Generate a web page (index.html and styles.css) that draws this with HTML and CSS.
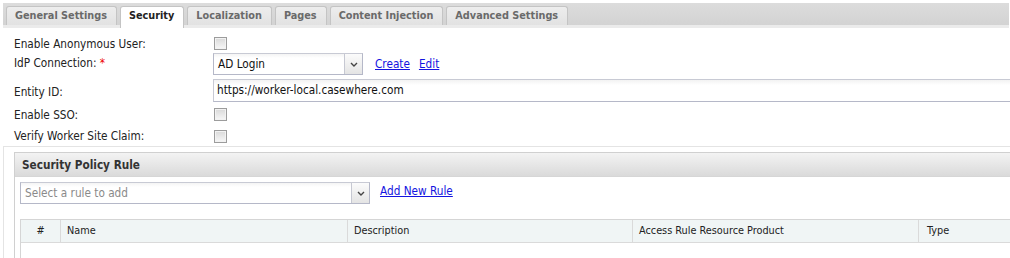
FILE: index.html
```html
<!DOCTYPE html>
<html>
<head>
<meta charset="utf-8">
<link rel="stylesheet" href="styles.css">
</head>
<body>
<div class="page">
  <div class="tabbar">
    <div class="tab">General Settings</div>
    <div class="tab active">Security</div>
    <div class="tab">Localization</div>
    <div class="tab">Pages</div>
    <div class="tab">Content Injection</div>
    <div class="tab">Advanced Settings</div>
  </div>
  <div class="tabstrip"></div>

  <div class="form">
    <div class="row r1">
      <div class="label">Enable Anonymous User:</div>
      <div class="field"><span class="checkbox"></span></div>
    </div>
    <div class="row r2">
      <div class="label lift">IdP Connection: <span class="req">*</span></div>
      <div class="field">
        <div class="combo w150">
          <span class="combo-text">AD Login</span>
          <span class="trigger"><svg width="8" height="5" viewBox="0 0 8 5"><path d="M1 1 L4 4 L7 1" fill="none" stroke="#444" stroke-width="1.4"/></svg></span>
        </div>
        <a class="link first" href="#">Create</a>
        <a class="link" href="#">Edit</a>
      </div>
    </div>
    <div class="row r3">
      <div class="label drop">Entity ID:</div>
      <div class="field"><div class="text-input">https://worker-local.casewhere.com</div></div>
    </div>
    <div class="row r4">
      <div class="label">Enable SSO:</div>
      <div class="field"><span class="checkbox"></span></div>
    </div>
    <div class="row r5">
      <div class="label">Verify Worker Site Claim:</div>
      <div class="field"><span class="checkbox"></span></div>
    </div>
  </div>

  <div class="outer">
    <div class="panel">
      <div class="panel-header">Security Policy Rule</div>
      <div class="panel-body">
        <div class="add-row">
          <div class="combo w350">
            <span class="combo-text placeholder">Select a rule to add</span>
            <span class="trigger"><svg width="8" height="5" viewBox="0 0 8 5"><path d="M1 1 L4 4 L7 1" fill="none" stroke="#444" stroke-width="1.4"/></svg></span>
          </div>
          <a class="link add" href="#">Add New Rule</a>
        </div>
        <div class="grid">
          <div class="grid-head">
            <div class="col c-num">#</div>
            <div class="col c-name">Name</div>
            <div class="col c-desc">Description</div>
            <div class="col c-prod">Access Rule Resource Product</div>
            <div class="col c-type">Type</div>
          </div>
          <div class="grid-body"></div>
        </div>
      </div>
    </div>
  </div>
</div>
</body>
</html>
```
FILE: styles.css
```css
html, body {
  margin: 0;
  padding: 0;
  background: #fff;
  overflow: hidden;
}
body {
  font-family: "DejaVu Sans Condensed", "DejaVu Sans", "Liberation Sans", sans-serif;
  font-stretch: condensed;
  font-size: 11.7px;
  color: #222;
  width: 1010px;
  height: 258px;
}
.page {
  width: 1010px;
  height: 258px;
  display: flex;
  flex-direction: column;
}

/* tabs */
.tabbar {
  margin: 3px 1px 0 3px;
  height: 22px;
  display: flex;
  align-items: flex-end;
  gap: 3px;
  padding-left: 3px;
  background: linear-gradient(#dcdcdc, #d3d3d3);
}
.tab {
  height: 18px;
  line-height: 18px;
  padding: 0 9px 0 8px;
  border: 1px solid #c4c4c4;
  border-bottom: none;
  border-radius: 3px 3px 0 0;
  background: linear-gradient(#ededed, #e2e2e2);
  color: #6a6a6a;
  font-weight: bold;
  font-size: 10.8px;
  white-space: nowrap;
}
.tab.active {
  background: #fff;
  color: #222;
  height: 19px;
  margin-bottom: -3px;
  padding-bottom: 2px;
  position: relative;
  z-index: 1;
}
.tabstrip {
  margin: 0 1px 0 3px;
  height: 3px;
  background: #ebebeb;
}

/* form */
.form {
  padding: 6px 0 0 14px;
}
.row {
  display: flex;
  align-items: center;
}
.label {
  width: 199px;
  flex: none;
  white-space: nowrap;
}
.label.lift { padding-bottom: 3px; }
.label.drop { padding-top: 2px; }
.req { color: #e00; }
.field {
  display: flex;
  align-items: center;
  flex: 1;
  min-width: 0;
}
.r1 { height: 19px; }
.r2 { height: 22px; }
.r3 { height: 25px; margin-top: 3px; }
.r4 { height: 23px; }
.r5 { height: 20px; }

.checkbox {
  display: inline-block;
  width: 11px;
  height: 11px;
  margin-left: 1px;
  border: 1px solid #9c9c9c;
  background: linear-gradient(#d9d9d9, #f7f7f7);
  box-shadow: inset 0 0 0 1px #f2f2f2;
}

.combo {
  display: flex;
  height: 20px;
  border: 1px solid #b5b8c8;
  border-top-color: #c8cad4;
  background: linear-gradient(#f4f4f4, #fff 4px);
  box-sizing: content-box;
}
.combo.w150 { width: 148px; }
.combo.w350 { width: 348px; }
.combo-text {
  flex: 1;
  padding-left: 4px;
  line-height: 20px;
  color: #111;
}
.combo-text.placeholder { color: #8a8a8a; }
.trigger {
  width: 17px;
  border-left: 1px solid #c6c8d2;
  background: linear-gradient(#fbfbfb, #e4e4e4);
  display: flex;
  align-items: center;
  justify-content: center;
}
.link {
  color: #1414e0;
  text-decoration: underline;
  margin-left: 9px;
}
.link.first { margin-left: 12px; }

.text-input {
  flex: 1;
  height: 21px;
  line-height: 21px;
  border: 1px solid #c8cad4;
  border-bottom-color: #b5b8c8;
  border-right: none;
  background: linear-gradient(#f2f2f2, #fff 5px);
  padding-left: 3px;
  color: #111;
}

/* outer panel */
.outer {
  flex: 1;
  margin-left: 3px;
  border-top: 1px solid #e4e4e4;
  border-left: 1px solid #e4e4e4;
  padding: 5px 0 0 10px;
  display: flex;
  flex-direction: column;
  min-height: 0;
}
.panel {
  flex: 1;
  border: 1px solid #d0d0d0;
  border-right: none;
  border-bottom: none;
  display: flex;
  flex-direction: column;
}
.panel-header {
  height: 24px;
  line-height: 24px;
  padding-left: 7px;
  font-weight: bold;
  color: #333;
  background: linear-gradient(#f3f3f3, #dadada);
  border-bottom: 1px solid #d6d6d6;
  box-sizing: border-box;
}
.panel-body {
  flex: 1;
  padding: 5px 0 0 5px;
  display: flex;
  flex-direction: column;
}
.add-row {
  display: flex;
  align-items: center;
}
.link.add {
  margin-left: 10px;
  padding-bottom: 4px;
}

.grid {
  flex: 1;
  margin-top: 15px;
  border-left: 1px solid #d5d5d5;
  border-top: 1px solid #d5d5d5;
  display: flex;
  flex-direction: column;
}
.grid-head {
  display: flex;
  height: 22px;
  background: #f0f5f5;
  border-bottom: 1px solid #dadada;
}
.col {
  line-height: 22px;
  padding-left: 6px;
  box-sizing: border-box;
  border-right: 1px solid #dadada;
  color: #222;
  font-size: 10.8px;
  white-space: nowrap;
}
.c-num { width: 40px; text-align: center; padding-left: 0; }
.c-name { width: 287px; }
.c-desc { width: 285px; }
.c-prod { width: 286px; }
.c-type { flex: 1; padding-left: 8px; border-right: none; }
.grid-body { flex: 1; }
```
